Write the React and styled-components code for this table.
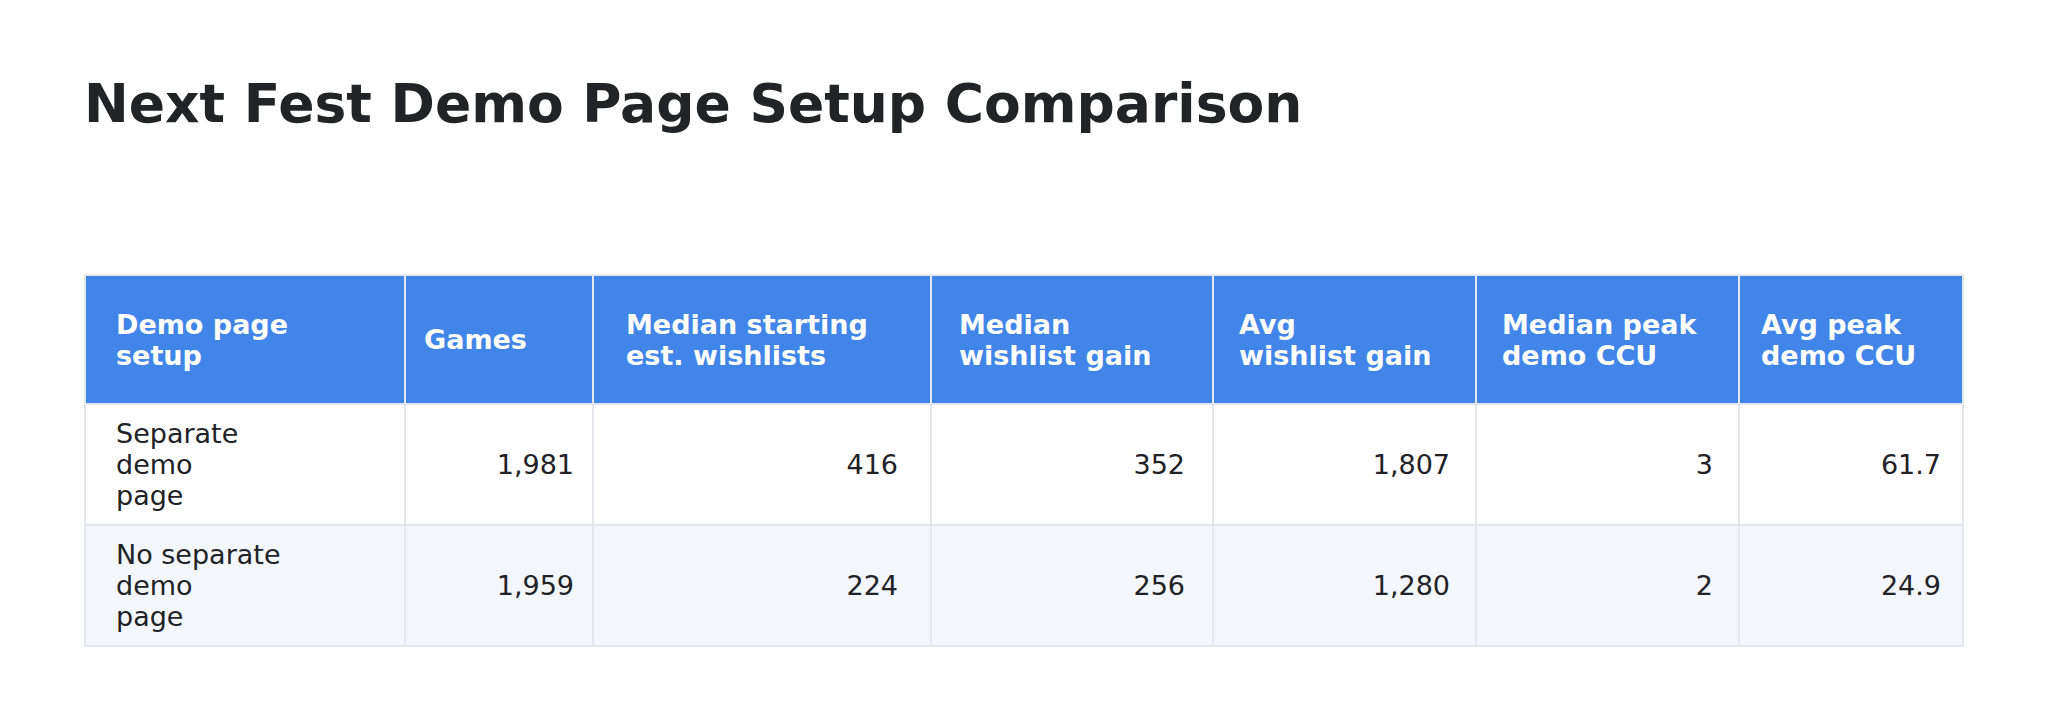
import React from 'react';
import styled, { createGlobalStyle } from 'styled-components';

// column widths include the 2px right border of each cell
const columns = [
  { key: 'setup', title: ['Demo page', 'setup'], width: 320, pad: 30, align: 'left' },
  { key: 'games', title: ['Games'], width: 188, pad: 18, align: 'right' },
  { key: 'start', title: ['Median starting', 'est. wishlists'], width: 338, pad: 32, align: 'right' },
  { key: 'gain', title: ['Median', 'wishlist gain'], width: 282, pad: 27, align: 'right' },
  { key: 'avgGain', title: ['Avg', 'wishlist gain'], width: 263, pad: 25, align: 'right' },
  { key: 'peak', title: ['Median peak', 'demo CCU'], width: 263, pad: 25, align: 'right' },
  { key: 'avgPeak', title: ['Avg peak', 'demo CCU'], width: 224, pad: 21, align: 'right' },
];

const rows = [
  {
    setup: ['Separate', 'demo', 'page'],
    games: '1,981',
    start: '416',
    gain: '352',
    avgGain: '1,807',
    peak: '3',
    avgPeak: '61.7',
  },
  {
    setup: ['No separate', 'demo', 'page'],
    games: '1,959',
    start: '224',
    gain: '256',
    avgGain: '1,280',
    peak: '2',
    avgPeak: '24.9',
  },
];

const GlobalStyle = createGlobalStyle`
  body {
    margin: 0;
    background: #ffffff;
    font-family: "DejaVu Sans", "Noto Sans", sans-serif;
    color: #212226;
  }
`;

const Page = styled.div`
  padding: 73px 84px 40px;
`;

const Title = styled.h1`
  margin: 0;
  font-size: 53.5px;
  font-weight: 700;
  line-height: 62px;
  color: #222327;
`;

const Table = styled.div`
  margin-top: 139px;
  display: grid;
  grid-template-columns: ${(p) => p.$cols};
  grid-template-rows: 129px 121px 121px;
  width: max-content;
  border-left: 2px solid #e3e7ee;
  border-top: 2px solid #e3e7ee;
`;

const HeadCell = styled.div`
  display: flex;
  flex-direction: column;
  justify-content: center;
  padding: 0 ${(p) => p.$pad}px;
  background: #4285e8;
  color: #ffffff;
  font-size: 27px;
  font-weight: 700;
  line-height: normal;
  border-right: 2px solid #e3e7ee;
  border-bottom: 2px solid #e3e7ee;
`;

const Cell = styled.div`
  display: flex;
  flex-direction: column;
  justify-content: center;
  align-items: ${(p) => (p.$align === 'right' ? 'flex-end' : 'flex-start')};
  padding: 0 ${(p) => p.$pad}px;
  background: ${(p) => (p.$shade ? '#f3f6fb' : '#ffffff')};
  font-size: 27px;
  line-height: normal;
  color: #212226;
  border-right: 2px solid #e3e7ee;
  border-bottom: 2px solid #e3e7ee;
`;

const Line = styled.span`
  display: block;
  white-space: nowrap;
`;

const Lines = ({ value }) =>
  (Array.isArray(value) ? value : [value]).map((t) => <Line key={t}>{t}</Line>);

const App = () => {
  const cols = columns.map((c) => `${c.width}px`).join(' ');
  return (
    <Page>
      <GlobalStyle />
      <Title>Next Fest Demo Page Setup Comparison</Title>
      <Table $cols={cols}>
        {columns.map((c) => (
          <HeadCell key={c.key} $pad={c.pad}>
            <Lines value={c.title} />
          </HeadCell>
        ))}
        {rows.map((row, i) =>
          columns.map((c) => (
            <Cell key={`${i}-${c.key}`} $pad={c.pad} $align={c.align} $shade={i % 2 === 1}>
              <Lines value={row[c.key]} />
            </Cell>
          ))
        )}
      </Table>
    </Page>
  );
};

export default App;
